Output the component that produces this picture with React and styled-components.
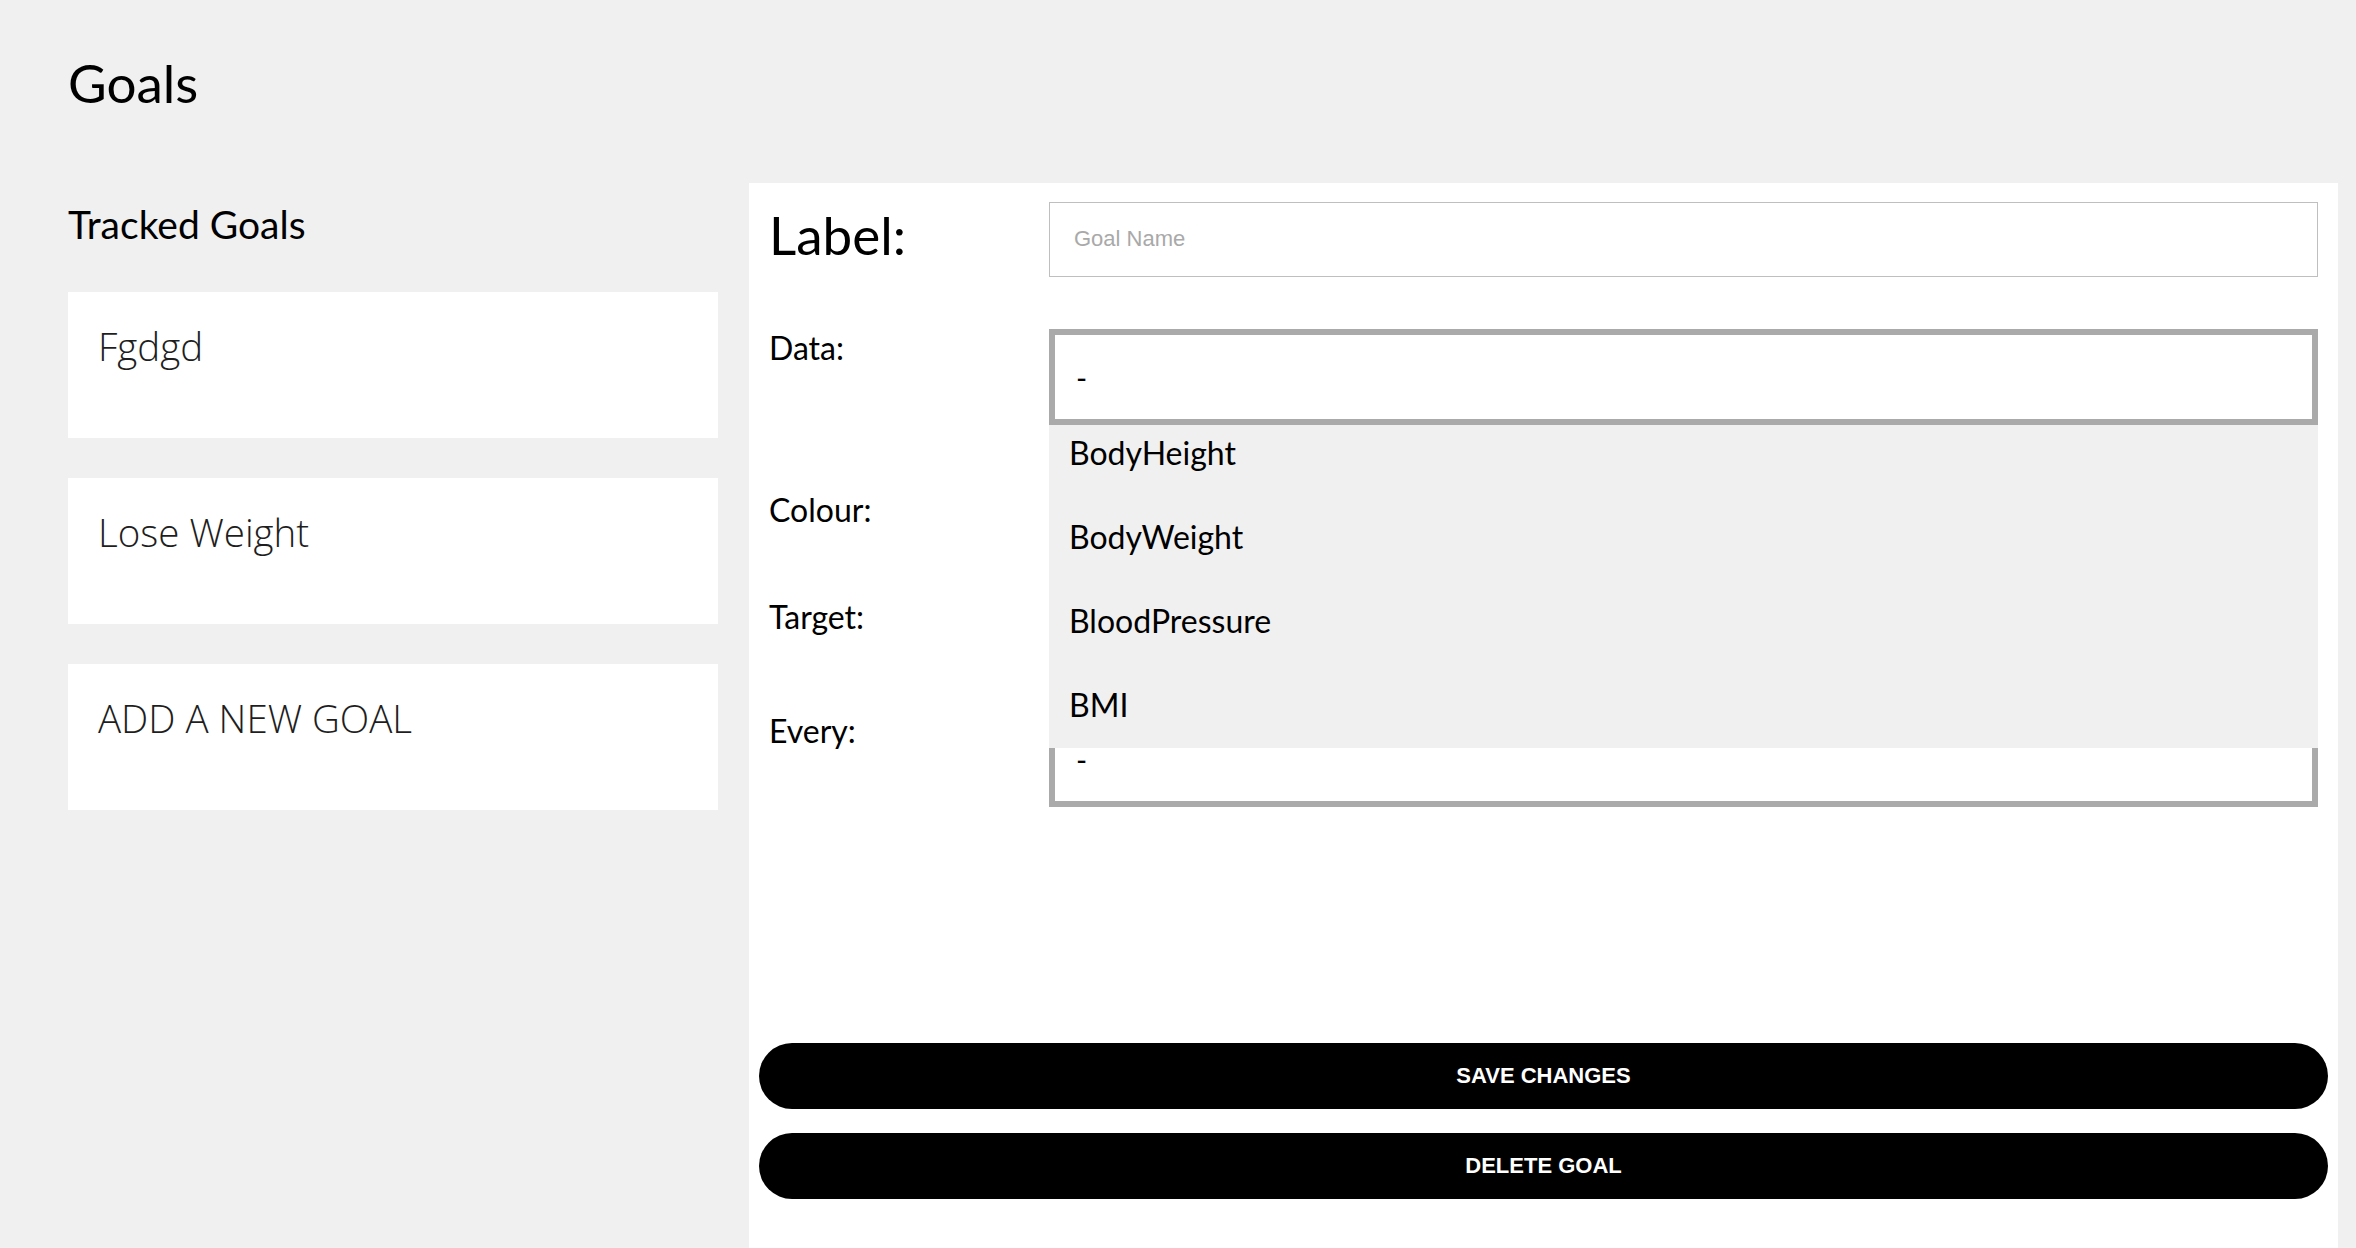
import React from 'react';
import styled, { createGlobalStyle } from 'styled-components';

const GlobalStyle = createGlobalStyle`
  html, body {
    margin: 0;
    padding: 0;
    background: #f0f0f0;
  }
  * {
    box-sizing: border-box;
  }
`;

const Page = styled.div`
  min-height: 100vh;
  display: flex;
  flex-direction: column;
  padding: 51px 18px 0 68px;
  background: #f0f0f0;
  font-family: Lato, "Noto Sans", sans-serif;
  color: #000;
`;

const Title = styled.h1`
  margin: 0;
  font-size: 53px;
  font-weight: 400;
  line-height: 1.2;
`;

const Content = styled.div`
  flex: 1;
  display: flex;
  align-items: stretch;
  gap: 31px;
  margin-top: 68px;
`;

const Sidebar = styled.div`
  width: 650px;
  flex-shrink: 0;
`;

const SideTitle = styled.h2`
  margin: 18px 0 45px;
  font-size: 39px;
  font-weight: 400;
  line-height: 1.2;
`;

const GoalList = styled.div`
  display: flex;
  flex-direction: column;
  gap: 40px;
`;

const GoalCard = styled.div`
  height: 146px;
  background: #fff;
  padding: 28px 30px;
  font-family: "Open Sans", Roboto, sans-serif;
  font-weight: 300;
  font-size: 38.5px;
  line-height: normal;
  color: #1e1e1e;
  cursor: pointer;
`;

const Panel = styled.div`
  flex: 1;
  background: #fff;
  padding: 19px 20px 0;
`;

const Form = styled.div`
  display: flex;
  flex-direction: column;
`;

const Row = styled.div`
  display: grid;
  grid-template-columns: 280px 1fr;
  align-items: start;
  margin-bottom: ${(p) => p.$space || 0}px;
`;

const BigLabel = styled.div`
  font-size: 53px;
  line-height: 1.2;
  margin-top: 1px;
`;

const FieldLabel = styled.div`
  font-size: 32px;
  line-height: 1.2;
`;

const TextInput = styled.input`
  width: 100%;
  height: 75px;
  border: 1px solid #bfbfbf;
  padding: 0 24px;
  font-family: "Liberation Sans", Arial, sans-serif;
  font-size: 22px;
  color: #000;
  outline: none;

  &::placeholder {
    color: #a9a9a9;
  }
`;

const SelectWrap = styled.div`
  position: relative;
`;

const SelectBox = styled.div`
  height: ${(p) => p.$h || 96}px;
  border: 6px solid #aaa;
  background: #fff;
  display: flex;
  align-items: center;
  padding-left: 21px;
  font-size: 30px;
`;

const PlainBox = styled.div`
  height: ${(p) => p.$h}px;
  border: 1px solid #bfbfbf;
  background: #fff;
`;

const Dropdown = styled.ul`
  position: absolute;
  top: 100%;
  left: 0;
  right: 0;
  height: 323px;
  margin: 0;
  padding: 0;
  list-style: none;
  background: #f0f0f0;
  overflow: hidden;
  z-index: 5;
`;

const Option = styled.li`
  height: 84px;
  padding: 9px 0 0 20px;
  font-size: 32px;
  line-height: 1.2;
  color: #000;
`;

const Actions = styled.div`
  display: flex;
  flex-direction: column;
  gap: 24px;
  margin: 236px -10px 0;
`;

const PillButton = styled.button`
  height: 66px;
  border: none;
  border-radius: 33px;
  background: #000;
  color: #fff;
  font-family: "Liberation Sans", Arial, sans-serif;
  font-weight: 700;
  font-size: 22px;
  cursor: pointer;
`;

const goals = ['Fgdgd', 'Lose Weight', 'ADD A NEW GOAL'];
const dataOptions = ['BodyHeight', 'BodyWeight', 'BloodPressure', 'BMI'];

export default function App() {
  return (
    <>
      <GlobalStyle />
      <Page>
        <Title>Goals</Title>
        <Content>
          <Sidebar>
            <SideTitle>Tracked Goals</SideTitle>
            <GoalList>
              {goals.map((g) => (
                <GoalCard key={g}>{g}</GoalCard>
              ))}
            </GoalList>
          </Sidebar>

          <Panel>
            <Form>
              <Row $space={52}>
                <BigLabel>Label:</BigLabel>
                <TextInput placeholder="Goal Name" />
              </Row>
              <Row $space={66}>
                <FieldLabel>Data:</FieldLabel>
                <SelectWrap>
                  <SelectBox>-</SelectBox>
                  <Dropdown>
                    {dataOptions.map((o) => (
                      <Option key={o}>{o}</Option>
                    ))}
                  </Dropdown>
                </SelectWrap>
              </Row>
              <Row $space={40}>
                <FieldLabel>Colour:</FieldLabel>
                <PlainBox $h={67} />
              </Row>
              <Row $space={40}>
                <FieldLabel>Target:</FieldLabel>
                <PlainBox $h={74} />
              </Row>
              <Row>
                <FieldLabel>Every:</FieldLabel>
                <SelectBox $h={95}>-</SelectBox>
              </Row>
            </Form>
            <Actions>
              <PillButton>SAVE CHANGES</PillButton>
              <PillButton>DELETE GOAL</PillButton>
            </Actions>
          </Panel>
        </Content>
      </Page>
    </>
  );
}
